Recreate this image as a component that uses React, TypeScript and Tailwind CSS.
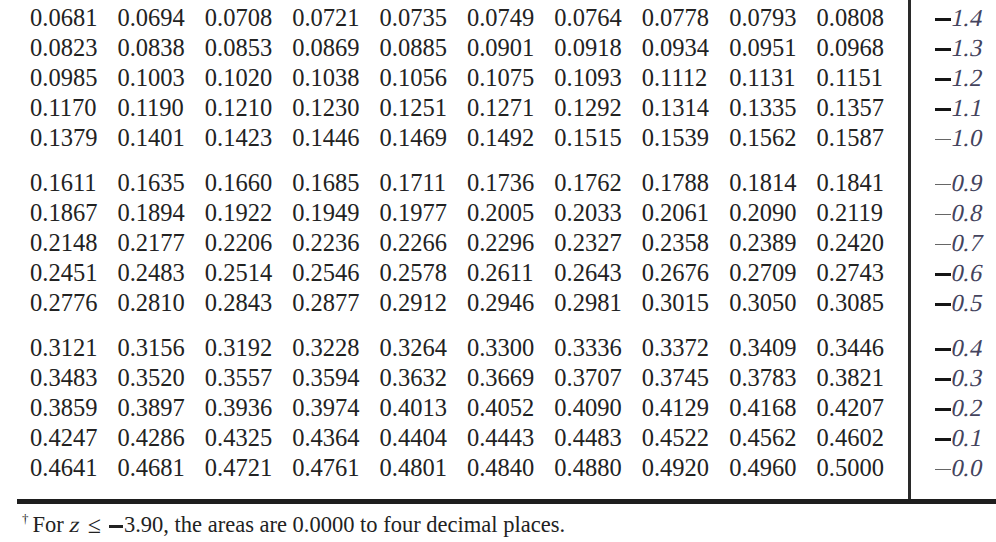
import React from "react";

const groups: string[][][] = [
  [
    ["0.0681", "0.0694", "0.0708", "0.0721", "0.0735", "0.0749", "0.0764", "0.0778", "0.0793", "0.0808"],
    ["0.0823", "0.0838", "0.0853", "0.0869", "0.0885", "0.0901", "0.0918", "0.0934", "0.0951", "0.0968"],
    ["0.0985", "0.1003", "0.1020", "0.1038", "0.1056", "0.1075", "0.1093", "0.1112", "0.1131", "0.1151"],
    ["0.1170", "0.1190", "0.1210", "0.1230", "0.1251", "0.1271", "0.1292", "0.1314", "0.1335", "0.1357"],
    ["0.1379", "0.1401", "0.1423", "0.1446", "0.1469", "0.1492", "0.1515", "0.1539", "0.1562", "0.1587"],
  ],
  [
    ["0.1611", "0.1635", "0.1660", "0.1685", "0.1711", "0.1736", "0.1762", "0.1788", "0.1814", "0.1841"],
    ["0.1867", "0.1894", "0.1922", "0.1949", "0.1977", "0.2005", "0.2033", "0.2061", "0.2090", "0.2119"],
    ["0.2148", "0.2177", "0.2206", "0.2236", "0.2266", "0.2296", "0.2327", "0.2358", "0.2389", "0.2420"],
    ["0.2451", "0.2483", "0.2514", "0.2546", "0.2578", "0.2611", "0.2643", "0.2676", "0.2709", "0.2743"],
    ["0.2776", "0.2810", "0.2843", "0.2877", "0.2912", "0.2946", "0.2981", "0.3015", "0.3050", "0.3085"],
  ],
  [
    ["0.3121", "0.3156", "0.3192", "0.3228", "0.3264", "0.3300", "0.3336", "0.3372", "0.3409", "0.3446"],
    ["0.3483", "0.3520", "0.3557", "0.3594", "0.3632", "0.3669", "0.3707", "0.3745", "0.3783", "0.3821"],
    ["0.3859", "0.3897", "0.3936", "0.3974", "0.4013", "0.4052", "0.4090", "0.4129", "0.4168", "0.4207"],
    ["0.4247", "0.4286", "0.4325", "0.4364", "0.4404", "0.4443", "0.4483", "0.4522", "0.4562", "0.4602"],
    ["0.4641", "0.4681", "0.4721", "0.4761", "0.4801", "0.4840", "0.4880", "0.4920", "0.4960", "0.5000"],
  ],
];

// z labels, bold = heavier minus sign as printed
const labels: { z: string; bold: boolean }[][] = [
  [
    { z: "1.4", bold: true },
    { z: "1.3", bold: true },
    { z: "1.2", bold: true },
    { z: "1.1", bold: true },
    { z: "1.0", bold: false },
  ],
  [
    { z: "0.9", bold: false },
    { z: "0.8", bold: false },
    { z: "0.7", bold: false },
    { z: "0.6", bold: true },
    { z: "0.5", bold: true },
  ],
  [
    { z: "0.4", bold: true },
    { z: "0.3", bold: true },
    { z: "0.2", bold: true },
    { z: "0.1", bold: true },
    { z: "0.0", bold: false },
  ],
];

export default function App() {
  return (
    <div
      className="w-[996px] h-[542px] overflow-hidden bg-white text-[#222]"
      style={{ fontFamily: '"Liberation Serif", "Times New Roman", serif' }}
    >
      <div className="ml-[17px] flex border-b-[5px] border-[#1e1e1e]">
        <div className="w-[894px] border-r-[3px] border-[#2a2a2a] pl-[13px] pt-[3px] pb-[16px] flex flex-col gap-[15px]">
          {groups.map((rows, gi) => (
            <div key={gi} className="flex flex-col">
              {rows.map((row, ri) => (
                <div key={ri} className="grid grid-cols-[repeat(10,87.4px)] h-[30px] items-center text-[24.5px] leading-[30px]">
                  {row.map((v, ci) => (
                    <span key={ci}>{v}</span>
                  ))}
                </div>
              ))}
            </div>
          ))}
        </div>
        <div className="pl-[24px] pt-[3px] flex flex-col gap-[15px]">
          {labels.map((rows, gi) => (
            <div key={gi} className="flex flex-col">
              {rows.map((l, ri) => (
                <div key={ri} className="h-[30px] flex items-center text-[24.5px] leading-[30px] text-[#44445e]">
                  <span
                    aria-label="minus"
                    className={
                      l.bold
                        ? "inline-block w-[16px] h-[3.5px] mt-[3px] bg-[#151515]"
                        : "inline-block w-[16px] h-[1.5px] mt-[3px] bg-[#666]"
                    }
                  />
                  <span className="inline-block -skew-x-12 ml-[1px]">{l.z}</span>
                </div>
              ))}
            </div>
          ))}
        </div>
      </div>
      <div className="pl-[22px] pt-[8px] text-[22.5px] leading-[26px] text-[#222] whitespace-nowrap flex items-center">
        <sup className="text-[13px] mr-[4px]">†</sup>
        <span>For </span>
        <span className="inline-block -skew-x-12 ml-[6px] mr-[8px]">z</span>
        <span className="text-[24px] mr-[8px]">≤</span>
        <span aria-label="minus" className="inline-block w-[14px] h-[3px] mt-[3px] mr-[1px] bg-[#222]" />
        <span>3.90, the areas are 0.0000 to four decimal places.</span>
      </div>
    </div>
  );
}
